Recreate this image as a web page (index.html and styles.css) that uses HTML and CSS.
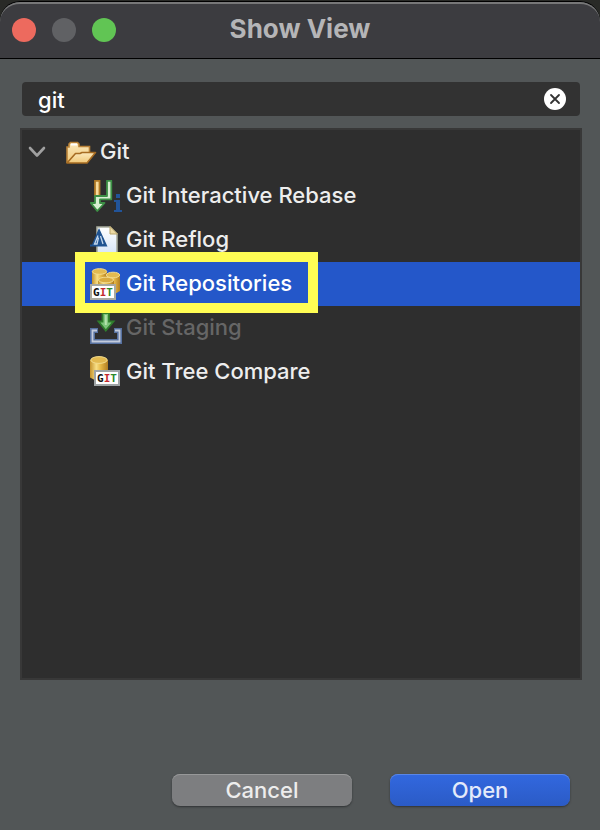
FILE: index.html
```html
<!DOCTYPE html>
<html lang="en">
<head>
    <meta charset="UTF-8">
    <meta name="viewport" content="width=device-width, initial-scale=1.0">
    <title>Show View</title>
    <link rel="stylesheet" href="styles.css">
</head>
<body>
    <div class="dialog">
        <header class="titlebar">
            <div class="lights">
                <button class="light close" type="button" aria-label="Close"></button>
                <button class="light minimize" type="button" aria-label="Minimize" disabled></button>
                <button class="light maximize" type="button" aria-label="Zoom"></button>
            </div>
            <h1>Show View</h1>
        </header>

        <main class="content">
            <div class="search">
                <input type="text" value="git" aria-label="Filter views">
                <button class="clear" type="button" aria-label="Clear">
                    <svg viewBox="0 0 22 22" width="22" height="22">
                        <circle cx="11" cy="11" r="11" fill="#fff"/>
                        <path d="M7 7l8 8M15 7l-8 8" stroke="#333" stroke-width="1.8" stroke-linecap="round"/>
                    </svg>
                </button>
            </div>

            <ul class="tree" role="tree">
                <li class="row group" role="treeitem" aria-expanded="true">
                    <svg class="chevron" viewBox="0 0 18 12" width="18" height="12">
                        <path d="M2 2l7 7.500l7-7.500" fill="none" stroke="#a0a0a0" stroke-width="2.6" stroke-linecap="round" stroke-linejoin="round"/>
                    </svg>
                    <span class="item">
                        <svg viewBox="0 0 32 32" width="32" height="32">
                            <defs>
                                <linearGradient id="folder" x1="0" y1="0" x2="0" y2="1">
                                    <stop offset="0" stop-color="#fbe9bd"/>
                                    <stop offset="1" stop-color="#f0c878"/>
                                </linearGradient>
                            </defs>
                            <path d="M1 27V11H3V8L4.5 6.5H11.5L13 8V10.5H23.5V17" fill="url(#folder)" stroke="#b98238" stroke-width="1.6"/>
                            <path d="M5 8.5h6" stroke="#fff" stroke-width="2"/>
                            <path d="M1 27L9.5 17.5H14L16 16.5H29.5L21 27Z" fill="url(#folder)" stroke="#a76c22" stroke-width="1.6" stroke-linejoin="round"/>
                        </svg>
                        <span class="label">Git</span>
                    </span>
                </li>
                <li class="row" role="treeitem">
                    <span class="item">
                        <svg viewBox="0 0 32 32" width="32" height="32">
                            <path d="M5 0.8h4.5v15h-4.5z" fill="#f8dc9c" stroke="#b07a26" stroke-width="1.8"/>
                            <path d="M17 0.8H21.3V19.3H10V23H14.5L7.3 31L0.8 23H5V16H17Z" fill="#d8efd2" stroke="#3c8f45" stroke-width="1.8" stroke-linejoin="round"/>
                            <path d="M26 14h4v4h-4zM24 20h6v10h2v2h-8v-2h2v-8h-2z" fill="#225499"/>
                        </svg>
                        <span class="label">Git Interactive Rebase</span>
                    </span>
                </li>
                <li class="row" role="treeitem">
                    <span class="item">
                        <svg viewBox="0 0 32 32" width="32" height="32">
                            <defs>
                                <linearGradient id="page" x1="0" y1="0" x2="0" y2="1">
                                    <stop offset="0" stop-color="#fff"/>
                                    <stop offset="1" stop-color="#d5e4f8"/>
                                </linearGradient>
                            </defs>
                            <path d="M7 3H20L27 10V31H7Z" fill="url(#page)" stroke="#a9ad9f" stroke-width="1.6"/>
                            <path d="M20 2.5V10H27.5Z" fill="#ecd9a4" stroke="#b9a56a"/>
                            <path d="M9 4L17.5 22.5H0V20.5H2Z" fill="#1f5391"/>
                            <path d="M8 11.5L4.5 20H7L8.5 13.5M10.5 12L13 20" fill="none" stroke="#c4d7ec" stroke-width="1.3"/>
                        </svg>
                        <span class="label">Git Reflog</span>
                    </span>
                </li>
                <li class="row selected" role="treeitem" aria-selected="true">
                    <span class="item marked">
                        <svg viewBox="0 0 32 32" width="32" height="32">
                            <defs>
                                <linearGradient id="gold" x1="0" y1="0" x2="1" y2="0">
                                    <stop offset="0" stop-color="#c4922c"/>
                                    <stop offset="0.35" stop-color="#f8df86"/>
                                    <stop offset="0.6" stop-color="#e6b845"/>
                                    <stop offset="1" stop-color="#b07d22"/>
                                </linearGradient>
                            </defs>
                            <path d="M2 3V19H17V3Z" fill="url(#gold)"/>
                            <ellipse cx="9.5" cy="3.5" rx="7.2" ry="2.8" fill="#e3ba50" stroke="#f3dc8e"/>
                            <path d="M16 7V23Q23 28 30 23V7Z" fill="url(#gold)"/>
                            <ellipse cx="23" cy="7" rx="6.6" ry="2.8" fill="#e3ba50" stroke="#f3dc8e"/>
                            <path d="M8 12V20H24V12Z" fill="url(#gold)"/>
                            <ellipse cx="16" cy="12" rx="7.5" ry="2.8" fill="#d9ab40" stroke="#f3dc8e"/>
                            <path d="M1 17H25V31H1Z" fill="#fff" stroke="#aaa9a0" stroke-width="2"/>
                            <text class="git" x="3" y="28"><tspan>G</tspan><tspan class="red">I</tspan><tspan class="green">T</tspan></text>
                        </svg>
                        <span class="label">Git Repositories</span>
                    </span>
                </li>
                <li class="row disabled" role="treeitem" aria-disabled="true">
                    <span class="item">
                        <svg viewBox="0 0 32 32" width="32" height="32">
                            <path d="M8 18.5H2.5V29.5H29.5V18.5H24" fill="none" stroke="#56709f" stroke-width="5"/>
                            <path d="M7 18.5H2.5V29.5H29.5V18.5H25" fill="none" stroke="#c3cbdc" stroke-width="1.8"/>
                            <path d="M12.5 1V9.5H8.5L15.8 18.5L23.5 9.5H19V1Z" fill="#7cc47a" stroke="#2f7d2c" stroke-width="1.8"/>
                            <path d="M15.8 3v10" stroke="#b4e2ac" stroke-width="2"/>
                        </svg>
                        <span class="label">Git Staging</span>
                    </span>
                </li>
                <li class="row" role="treeitem">
                    <span class="item">
                        <svg viewBox="0 0 32 32" width="32" height="32">
                            <path d="M0 4V21.5Q9 28 18 21.5V4Z" fill="url(#gold)"/>
                            <ellipse cx="9" cy="4" rx="8.2" ry="3.4" fill="#e3ba50" stroke="#f3dc8e"/>
                            <path d="M5 15H29V29H5Z" fill="#fff" stroke="#9fa4a6" stroke-width="2"/>
                            <text class="git" x="7" y="26"><tspan>G</tspan><tspan class="red">I</tspan><tspan class="green">T</tspan></text>
                        </svg>
                        <span class="label">Git Tree Compare</span>
                    </span>
                </li>
            </ul>

            <div class="buttons">
                <button class="btn" type="button">Cancel</button>
                <button class="btn primary" type="button">Open</button>
            </div>
        </main>
    </div>
</body>
</html>
```

FILE: styles.css
```css
* {
    box-sizing: border-box;
}
body {
    margin: 0;
    padding-top: 1px;
    background: #292a27;
    font-family: Inter, "Liberation Sans", sans-serif;
    font-size: 22px;
    color: #ededed;
}
button {
    font: inherit;
    border: none;
    padding: 0;
}
.dialog {
    display: flex;
    flex-direction: column;
    min-height: calc(100vh - 1px);
    border-top: 1px solid #000;
    border-radius: 20px 20px 0 0;
    background: #525657;
    overflow: hidden;
}
.titlebar {
    display: grid;
    grid-template-columns: 1fr auto 1fr;
    align-items: center;
    height: 57px;
    padding: 0 12px 3px;
    background: #3c3c40;
    border-top: 2px solid #777778;
    border-bottom: 1px solid #000;
    border-radius: 20px 20px 0 0;
}
.titlebar h1 {
    margin: 0;
    padding-bottom: 2px;
    font-size: 26px;
    line-height: 32px;
    font-weight: 700;
    color: #b5b5b7;
}
.lights {
    display: flex;
    gap: 16px;
}
.light {
    width: 24px;
    height: 24px;
    border-radius: 50%;
}
.close {
    background: #ed6a5e;
}
.minimize {
    background: #606164;
}
.maximize {
    background: #61c554;
}
.content {
    display: flex;
    flex-direction: column;
    flex: 1;
    padding: 23px 18px 24px 20px;
}
.search {
    display: flex;
    align-items: center;
    height: 34px;
    margin: 0 2px 12px;
    padding: 0 14px 0 16px;
    background: #323232;
    border-radius: 4px;
}
.search input {
    flex: 1;
    min-width: 0;
    padding: 2px 0 0;
    border: none;
    outline: none;
    background: none;
    font: inherit;
    font-weight: 500;
    color: #fff;
}
.clear {
    display: flex;
    background: none;
}
.tree {
    flex: 1;
    margin: 0 0 94px;
    padding: 0;
    list-style: none;
    background: #2e2e2e;
    border: 2px solid #383838;
}
.row {
    display: flex;
    align-items: center;
    height: 44px;
    padding-left: 68px;
    font-weight: 500;
}
.item {
    display: flex;
    align-items: center;
    gap: 4px;
    height: 44px;
}
.group {
    gap: 20px;
    padding-left: 6px;
}
.group .item {
    gap: 2px;
}
.selected {
    background: #2457c9;
    color: #fff;
}
.disabled {
    color: #666;
}
.label {
    padding-bottom: 2px;
    white-space: nowrap;
}
/* yellow frame round the selected view */
.marked {
    position: relative;
}
.marked::after {
    content: "";
    position: absolute;
    inset: -10px -26px -7px -15px;
    border: 10px solid #fffd54;
}
.git {
    font: bold 11px "DejaVu Sans Mono", monospace;
    fill: #111;
}
.git .red {
    fill: #c3282d;
}
.git .green {
    fill: #2c8a2c;
}
.buttons {
    display: flex;
    justify-content: flex-end;
    gap: 38px;
    padding-right: 12px;
}
.btn {
    width: 180px;
    height: 32px;
    border-radius: 8px;
    background: #7d7e80;
    box-shadow: inset 0 1px #979899, 0 1px 2px #303334;
    font-weight: 500;
    color: #ededed;
}
.primary {
    background: linear-gradient(#3268df, #2b5bc6);
    box-shadow: inset 0 1px #5a86e6, 0 1px 2px #303334;
    color: #e3eafa;
}
```
